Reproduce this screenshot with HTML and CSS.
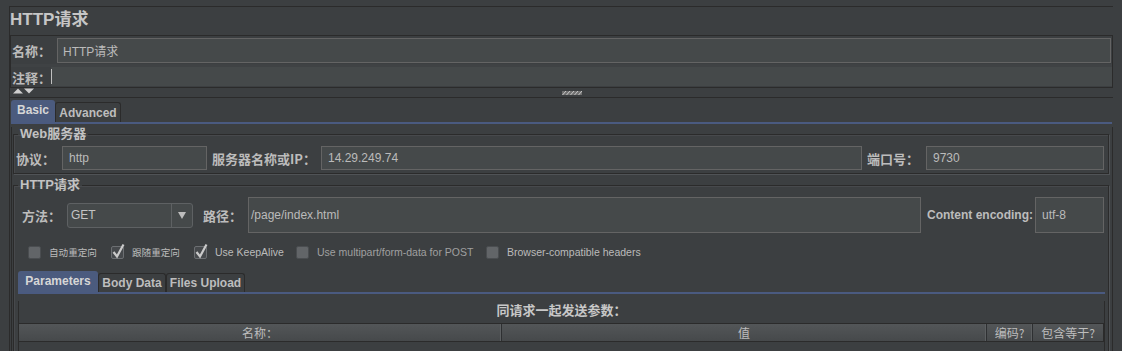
FILE: index.html
```html
<!DOCTYPE html>
<html lang="zh-CN">
<head>
<meta charset="utf-8">
<title>HTTP请求</title>
<link rel="stylesheet" href="styles.css">
</head>
<body>
<div class="frame">
  <div class="title">HTTP请求</div>

  <div class="name-panel">
    <div class="name-row">
      <span class="lbl name-lbl">名称：</span>
      <div class="field name-field">HTTP请求</div>
    </div>
    <div class="sep-strip"></div>
    <div class="comment-row">
      <span class="lbl comment-lbl">注释：</span>
      <div class="comment-field"><span class="caret"></span></div>
    </div>
  </div>

  <div class="splitter">
    <svg class="arrows" width="22" height="6" viewBox="0 0 22 6"><polygon points="0,5.5 5,0.5 10,5.5" fill="#cfcfcf"/><polygon points="11,0.5 21,0.5 16,5.5" fill="#cfcfcf"/></svg>
    <svg class="grip" width="20" height="6" viewBox="0 0 20 6">
      <rect x="0" y="1" width="20" height="4" fill="#707070"/>
      <path d="M0.5 5 L4 1 M4.5 5 L8 1 M8.5 5 L12 1 M12.5 5 L16 1 M16.5 5 L20 1" stroke="#c8c8c8" stroke-width="1" fill="none"/>
    </svg>
  </div>

  <div class="tabs main-tabs">
    <div class="tab active tab-basic">Basic</div>
    <div class="tab inactive tab-adv">Advanced</div>
  </div>

  <div class="tab-body">
    <fieldset class="group web">
      <legend>Web服务器</legend>
      <div class="row-web">
        <span class="lbl w-proto">协议：</span>
        <div class="field f-proto">http</div>
        <span class="lbl w-host">服务器名称或IP：</span>
        <div class="field f-host">14.29.249.74</div>
        <span class="lbl w-port">端口号：</span>
        <div class="field f-port">9730</div>
      </div>
    </fieldset>

    <fieldset class="group http">
      <legend>HTTP请求</legend>
      <div class="row-method">
        <span class="lbl w-method">方法：</span>
        <div class="select">
          <span class="select-text">GET</span>
          <span class="select-arrow"><svg width="8" height="7" viewBox="0 0 8 7"><polygon points="0,0 8,0 4,7" fill="#bdbdbd"/></svg></span>
        </div>
        <span class="lbl w-path">路径：</span>
        <div class="field f-path">/page/index.html</div>
        <span class="lbl-latin w-enc">Content encoding:</span>
        <div class="field f-enc">utf-8</div>
      </div>

      <div class="row-checks">
        <label class="chk c1">
          <svg class="box" width="13" height="13" viewBox="0 0 13 13"><rect x="0.5" y="0.5" width="12" height="12" rx="1.5" fill="#626568" stroke="#4a4d50"/></svg>
          <span class="chk-cjk">自动重定向</span>
        </label>
        <label class="chk c2">
          <svg class="box" width="13" height="13" viewBox="0 0 13 13" overflow="visible"><rect x="0.5" y="0.5" width="12" height="12" rx="1.5" fill="#46494c" stroke="#6c6f72"/><path d="M2.5 6 L6 10.5 L12.5 -1.5" fill="none" stroke="#cacaca" stroke-width="2.2"/></svg>
          <span class="chk-cjk">跟随重定向</span>
        </label>
        <label class="chk c3">
          <svg class="box" width="13" height="13" viewBox="0 0 13 13" overflow="visible"><rect x="0.5" y="0.5" width="12" height="12" rx="1.5" fill="#46494c" stroke="#6c6f72"/><path d="M2.5 6 L6 10.5 L12.5 -1.5" fill="none" stroke="#cacaca" stroke-width="2.2"/></svg>
          <span class="chk-txt">Use KeepAlive</span>
        </label>
        <label class="chk c4">
          <svg class="box" width="13" height="13" viewBox="0 0 13 13"><rect x="0.5" y="0.5" width="12" height="12" rx="1.5" fill="#626568" stroke="#4a4d50"/></svg>
          <span class="chk-txt dim">Use multipart/form-data for POST</span>
        </label>
        <label class="chk c5">
          <svg class="box" width="13" height="13" viewBox="0 0 13 13"><rect x="0.5" y="0.5" width="12" height="12" rx="1.5" fill="#626568" stroke="#4a4d50"/></svg>
          <span class="chk-txt">Browser-compatible headers</span>
        </label>
      </div>

      <div class="tabs param-tabs">
        <div class="tab active tab-params">Parameters</div>
        <div class="tab inactive tab-body-data">Body Data</div>
        <div class="tab inactive tab-files">Files Upload</div>
      </div>

      <div class="params-panel">
        <div class="params-caption">同请求一起发送参数：</div>
        <div class="grid-header">
          <div class="hcell">名称：</div>
          <div class="hcell">值</div>
          <div class="hcell">编码?</div>
          <div class="hcell last">包含等于?</div>
        </div>
      </div>
    </fieldset>
  </div>
</div>
</body>
</html>
```

FILE: styles.css
```css
* { box-sizing: border-box; }

html, body {
  margin: 0;
  padding: 0;
}

body {
  width: 1122px;
  height: 351px;
  overflow: hidden;
  background: #3c3f41;
  color: #bbbbbb;
  font-family: "Liberation Sans", "Noto Sans CJK SC", sans-serif;
  font-size: 12px;
}

.frame {
  margin: 6px 0 0 9px;
  width: 1104px;
  height: 345px;
  border-top: 1px solid #2b2b2b;
  border-left: 1px solid #2b2b2b;
  overflow: hidden;
}

.title {
  height: 28px;
  padding-top: 2px;
  font-weight: bold;
  font-size: 17px;
  line-height: 22px;
  color: #c6c6c6;
}

/* labels */
.lbl {
  font-family: "Noto Sans CJK SC", "Liberation Sans", sans-serif;
  font-weight: bold;
  font-size: 13px;
  color: #bcbcbc;
  white-space: nowrap;
  flex: none;
}

.lbl-latin {
  font-family: "Liberation Sans", sans-serif;
  font-weight: bold;
  font-size: 12px;
  color: #bcbcbc;
  white-space: nowrap;
  flex: none;
}

.field {
  flex: none;
  background: #45494a;
  border: 1px solid #646464;
  font-size: 12px;
  color: #bbbbbb;
  padding-left: 5px;
  display: flex;
  align-items: center;
  white-space: nowrap;
}

/* name / comment panel */
.name-panel {
  width: 1103px;
  height: 53px;
  border: 1px solid #2b2b2b;
}

.name-row {
  display: flex;
  align-items: center;
  height: 28px;
}

.name-lbl {
  width: 46px;
  padding-left: 1px;
}

.name-field {
  width: 1054px;
  height: 25px;
}

.sep-strip {
  height: 3px;
  background: #3f4244;
}

.comment-row {
  display: flex;
  align-items: center;
  height: 20px;
}

.comment-lbl {
  width: 40px;
  padding-left: 1px;
}

.comment-field {
  flex: 1;
  align-self: stretch;
  background: #45494a;
  margin-bottom: 1px;
  display: flex;
  align-items: center;
}

.caret {
  width: 1px;
  height: 15px;
  background: #c0c0c0;
}

/* splitter */
.splitter {
  height: 10px;
  border-bottom: 1px solid #2b2b2b;
  display: flex;
  align-items: flex-start;
}

.arrows {
  margin-left: 3px;
  display: block;
}

.grip {
  margin-left: 527px;
  margin-top: 2px;
  display: block;
}

/* tabs */
.tabs {
  display: flex;
  align-items: flex-end;
  border-bottom: 2px solid #4a5a80;
}

.tab {
  font-weight: bold;
  font-size: 12px;
  display: flex;
  align-items: center;
  justify-content: center;
  white-space: nowrap;
  flex: none;
  border-radius: 3px 3px 0 0;
}

.tab.active {
  background: #4b5b7e;
  color: #d6d6d6;
  padding-bottom: 2px;
}

.tab.inactive {
  border: 1px solid #2b2b2b;
  border-bottom: none;
  color: #bdbdbd;
}

.main-tabs {
  height: 26px;
  margin-left: 1px;
  width: 1101px;
}

.tab-basic { width: 44px; height: 22px; }
.tab-adv { width: 66px; height: 20px; }

.tab-body {
  width: 1102px;
  margin-left: 1px;
  height: 260px;
  border-left: 1px solid #2b2b2b;
  border-right: 1px solid #2b2b2b;
  padding: 0 3px 0 1px;
}

/* group boxes */
fieldset.group {
  margin: 3px 0 0 0;
  padding: 0;
  min-width: 0;
  border: 1px solid #2b2b2b;
  box-shadow: 1px 1px 0 #505356, inset 1px 1px 0 #47494c;
}

fieldset.group legend {
  font-family: "Liberation Sans", "Noto Sans CJK SC", sans-serif;
  font-weight: bold;
  font-size: 13px;
  line-height: 14px;
  padding: 0 2px;
  margin-left: 4px;
  color: #c2c2c2;
}

fieldset.http {
  margin-top: 4px;
  height: 200px;
}

/* web server row */
.row-web {
  display: flex;
  align-items: center;
  height: 24px;
  margin: 5px 0 3px;
  padding-left: 2px;
}

.row-web .field { height: 24px; }

.w-proto { width: 46px; }
.f-proto { width: 145px; padding-left: 6px; }
.w-host { width: 114px; padding-left: 5px; }
.f-host { width: 541px; padding-left: 6px; }
.w-port { width: 64px; padding-left: 5px; }
.f-port { width: 178px; padding-left: 6px; }

/* method row */
.row-method {
  display: flex;
  align-items: center;
  height: 36px;
  margin-top: 5px;
  padding-left: 8px;
}

.w-method { width: 45px; }

.select {
  flex: none;
  width: 126px;
  height: 25px;
  border: 1px solid #5e6163;
  border-radius: 3px;
  background: #45494a;
  display: flex;
}

.select-text {
  flex: 1;
  padding-left: 3px;
  line-height: 23px;
  font-size: 12px;
  color: #c4c4c4;
}

.select-arrow {
  width: 21px;
  border-left: 1px solid #5e6163;
  display: flex;
  align-items: center;
  justify-content: center;
}

.select-arrow svg { display: block; }

.w-path { width: 55px; padding-left: 10px; }
.f-path { width: 673px; height: 36px; padding-left: 2px; }
.w-enc { width: 114px; padding-left: 6px; }
.f-enc { width: 69px; height: 36px; padding-left: 6px; }

/* checkboxes */
.row-checks {
  display: flex;
  align-items: center;
  height: 16px;
  margin-top: 11px;
  padding-left: 14px;
}

.chk {
  display: flex;
  align-items: center;
  gap: 8px;
  flex: none;
}

.chk .box { display: block; flex: none; }

.c1 { width: 83px; }
.c2 { width: 83px; }
.c3 { width: 102px; }
.c4 { width: 190px; }

.chk-cjk {
  font-family: "Noto Sans CJK SC", sans-serif;
  font-size: 9.6px;
  color: #bbbbbb;
  white-space: nowrap;
}

.chk-txt {
  font-size: 10.5px;
  color: #bbbbbb;
  white-space: nowrap;
}

.chk-txt.dim { color: #a0a0a0; }

/* params tabs */
.param-tabs {
  height: 23px;
  margin: 11px 3px 0 4px;
}

.tab-params { width: 80px; height: 21px; }
.tab-body-data { width: 68px; height: 19px; }
.tab-files { width: 79px; height: 19px; }

.params-panel {
  margin: 0 3px 0 4px;
  height: 80px;
  border-left: 1px solid #2b2b2b;
  border-right: 1px solid #2b2b2b;
}

.params-caption {
  margin-top: 7px;
  line-height: 18px;
  text-align: center;
  font-family: "Noto Sans CJK SC", sans-serif;
  font-weight: bold;
  font-size: 13px;
  color: #c8c8c8;
}

.grid-header {
  margin-top: 4px;
  height: 19px;
  display: grid;
  grid-template-columns: 483px 485px 46px 1fr;
  border-top: 1px solid #2b2b2b;
  border-bottom: 1px solid #2b2b2b;
  border-right: 1px solid #2b2b2b;
  background: linear-gradient(#535658, #46494b);
}

.hcell {
  font-family: "Noto Sans CJK SC", sans-serif;
  font-size: 12px;
  line-height: 17px;
  text-align: center;
  color: #bdbdbd;
  border-right: 1px solid #2e3032;
  box-shadow: inset -2px 0 0 -1px #5c5f61;
  white-space: nowrap;
}

.hcell.last {
  border-right: none;
  box-shadow: none;
}
```
